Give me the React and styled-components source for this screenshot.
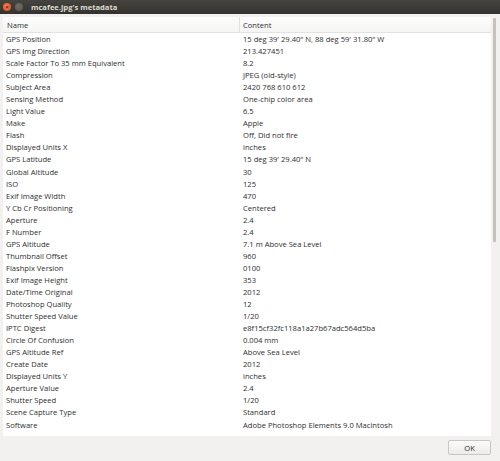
import React from "react";
import styled, { createGlobalStyle } from "styled-components";

const GlobalStyle = createGlobalStyle`
* { margin: 0; padding: 0; box-sizing: border-box; }
body { background: #f2f1f0; font-family: "Open Sans", "DejaVu Sans", sans-serif; }
`;

const Window = styled.div`
  width: 500px;
  height: 461px;
  display: flex;
  flex-direction: column;
  background: #f2f1f0;
  overflow: hidden;
`;

const TitleBar = styled.div`
  height: 14px;
  flex: none;
  display: flex;
  align-items: center;
  padding-left: 3px;
  gap: 4px;
  background: linear-gradient(#45443f, #33322e);
`;

const Dot = styled.span`
  width: 8px;
  height: 8px;
  border-radius: 50%;
  background: ${(p) => (p.close ? "radial-gradient(circle at 40% 35%, #f47a50, #d94f1e)" : "radial-gradient(circle at 40% 35%, #6e6d68, #55544f)")};
  display: flex;
  align-items: center;
  justify-content: center;
  color: #3a2a20;
  font-size: 6px;
  font-weight: bold;
  line-height: 1;
`;

const Title = styled.span`
  margin-left: 4px;
  color: #dfdbd2;
  font-size: 7.6px;
  font-weight: bold;
`;

const Body = styled.div`
  flex: 1;
  display: flex;
  flex-direction: column;
  padding: 3px 2px 0 3px;
`;

const TableArea = styled.div`
  height: 419px;
  display: flex;
  background: #fff;
`;

const Table = styled.div`
  flex: 1;
  overflow: hidden;
`;

const Header = styled.div`
  display: flex;
  height: 16px;
  align-items: center;
  background: linear-gradient(#fcfcfc, #f5f5f4);
  border-bottom: 1px solid #e3e2df;
  color: #2e2e2e;
  font-size: 7.6px;
`;

const Row = styled.div`
  display: flex;
  height: 12.06px;
  align-items: center;
  color: #2e2e2e;
  font-size: 7.6px;
  white-space: nowrap;
`;

const Rows = styled.div``;

const NameCell = styled.div`
  width: 237px;
  padding-left: 3px;
  flex: none;
  ${(p) => p.head && "padding-left: 4px; border-right: 1px solid #e3e2df; height: 100%; display: flex; align-items: center;"}
`;

const ValueCell = styled.div`
  padding-left: 3px;
`;

const ScrollTrack = styled.div`
  width: 7px;
  flex: none;
  background: #f2f1f0;
  display: flex;
  justify-content: center;
  padding-top: 1px;
`;

const Thumb = styled.div`
  width: 3px;
  height: 224px;
  background: #c3c2bf;
  border-radius: 1px;
`;

const Footer = styled.div`
  display: flex;
  justify-content: flex-end;
  padding: 4px 7px 0 0;
`;

const OkButton = styled.button`
  width: 43px;
  height: 15px;
  border: 1px solid #c8c6c2;
  border-radius: 2px;
  background: linear-gradient(#fbfbfa, #ecebe9);
  color: #2e2e2e;
  font-family: "Open Sans", "DejaVu Sans", sans-serif;
  font-size: 7.6px;
`;

const data = [
  ["GPS Position", "15 deg 39' 29.40\" N, 88 deg 59' 31.80\" W"],
  ["GPS Img Direction", "213.427451"],
  ["Scale Factor To 35 mm Equivalent", "8.2"],
  ["Compression", "JPEG (old-style)"],
  ["Subject Area", "2420 768 610 612"],
  ["Sensing Method", "One-chip color area"],
  ["Light Value", "6.5"],
  ["Make", "Apple"],
  ["Flash", "Off, Did not fire"],
  ["Displayed Units X", "inches"],
  ["GPS Latitude", "15 deg 39' 29.40\" N"],
  ["Global Altitude", "30"],
  ["ISO", "125"],
  ["Exif Image Width", "470"],
  ["Y Cb Cr Positioning", "Centered"],
  ["Aperture", "2.4"],
  ["F Number", "2.4"],
  ["GPS Altitude", "7.1 m Above Sea Level"],
  ["Thumbnail Offset", "960"],
  ["Flashpix Version", "0100"],
  ["Exif Image Height", "353"],
  ["Date/Time Original", "2012"],
  ["Photoshop Quality", "12"],
  ["Shutter Speed Value", "1/20"],
  ["IPTC Digest", "e8f15cf32fc118a1a27b67adc564d5ba"],
  ["Circle Of Confusion", "0.004 mm"],
  ["GPS Altitude Ref", "Above Sea Level"],
  ["Create Date", "2012"],
  ["Displayed Units Y", "inches"],
  ["Aperture Value", "2.4"],
  ["Shutter Speed", "1/20"],
  ["Scene Capture Type", "Standard"],
  ["Software", "Adobe Photoshop Elements 9.0 Macintosh"],
];

export default function App() {
  return (
    <Window>
      <GlobalStyle />
      <TitleBar>
        <Dot close>×</Dot>
        <Dot />
        <Title>mcafee.jpg's metadata</Title>
      </TitleBar>
      <Body>
        <TableArea>
          <Table>
            <Header>
              <NameCell head>Name</NameCell>
              <ValueCell>Content</ValueCell>
            </Header>
            <Rows>
              {data.map(([k, v]) => (
                <Row key={k}>
                  <NameCell>{k}</NameCell>
                  <ValueCell>{v}</ValueCell>
                </Row>
              ))}
            </Rows>
          </Table>
          <ScrollTrack>
            <Thumb />
          </ScrollTrack>
        </TableArea>
        <Footer>
          <OkButton>OK</OkButton>
        </Footer>
      </Body>
    </Window>
  );
}
